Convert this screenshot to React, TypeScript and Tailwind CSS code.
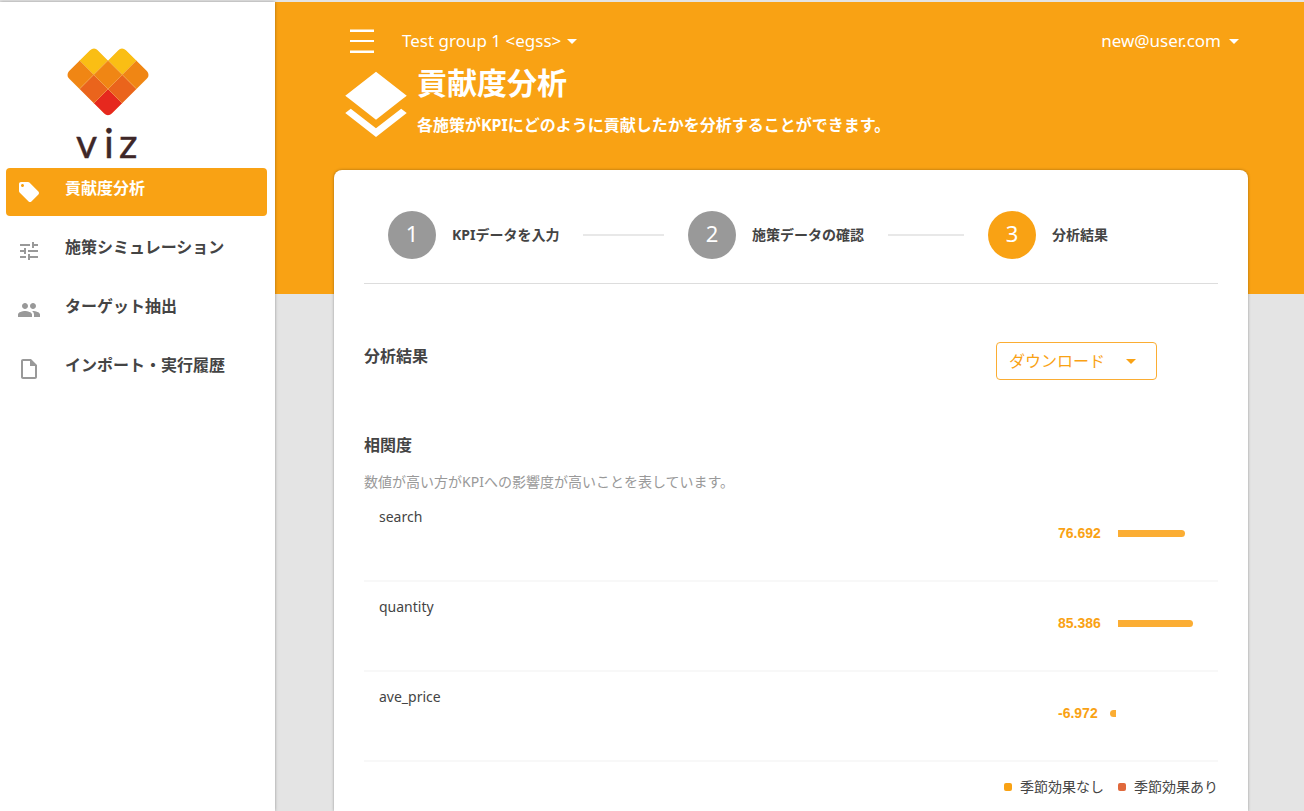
import type { ReactNode } from 'react';
import {
  MdLayers,
  MdLocalOffer,
  MdOutlineInsertDriveFile,
  MdPeople,
  MdTune,
} from 'react-icons/md';

type NavItem = {
  label: string;
  icon: ReactNode;
  active?: boolean;
};

const navItems: NavItem[] = [
  { label: '貢献度分析', icon: <MdLocalOffer size={24} />, active: true },
  { label: '施策シミュレーション', icon: <MdTune size={24} /> },
  { label: 'ターゲット抽出', icon: <MdPeople size={24} /> },
  { label: 'インポート・実行履歴', icon: <MdOutlineInsertDriveFile size={24} /> },
];

const steps = [
  { label: 'KPIデータを入力', current: false },
  { label: '施策データの確認', current: false },
  { label: '分析結果', current: true },
];

const correlations = [
  { name: 'search', value: 76.692 },
  { name: 'quantity', value: 85.386 },
  { name: 'ave_price', value: -6.972 },
];

function Caret() {
  return (
    <svg width="10" height="5" viewBox="0 0 10 5" fill="currentColor" aria-hidden="true">
      <path d="M0 0h10L5 5z" />
    </svg>
  );
}

function Logo() {
  return (
    <svg width="84" height="120" viewBox="0 0 84 120" role="img" aria-label="viz">
      <defs>
        <clipPath id="heart">
          <path d="M24 2.200Q28 -1.200 32 2.200L42 12.500L52 2.200Q56 -1.200 60 2.200L81 23Q84 27 81 31L46 65.500Q42 69 38 65.500L3 31Q0 27 3 23Z" />
        </clipPath>
      </defs>
      <g clipPath="url(#heart)" stroke="#f5b04a" strokeWidth="0.4">
        <path fill="#fabe14" d="M27.700 -1.700L42 12.500 27.700 26.800 13.500 12.500z" />
        <path fill="#fabe14" d="M56.300 -1.700L70.500 12.500 56.300 26.800 42 12.500z" />
        <path fill="#f08614" d="M13.500 12.500L27.700 26.800 13.500 41 -0.800 26.800z" />
        <path fill="#f08614" d="M42 12.500L56.300 26.800 42 41 27.700 26.800z" />
        <path fill="#f08614" d="M70.500 12.500L84.800 26.800 70.500 41 56.300 26.800z" />
        <path fill="#ea641c" d="M27.700 26.800L42 41 27.700 55.300 13.500 41z" />
        <path fill="#ea641c" d="M56.300 26.800L70.500 41 56.300 55.300 42 41z" />
        <path fill="#e6281e" d="M42 41L56.300 55.300 42 69.600 27.700 55.300z" />
      </g>
      <text
        x="10 38 53"
        y="110"
        fontFamily="Lato, sans-serif"
        fontSize="41"
        fill="#3e2728"
        stroke="#3e2728"
        strokeWidth="0.4"
      >
        viz
      </text>
    </svg>
  );
}

function Sidebar() {
  return (
    <aside className="relative w-[275px] shrink-0 bg-white shadow-[0_0_3px_rgba(0,0,0,0.35)]">
      <div className="flex justify-center pt-[46px] pr-[59px]">
        <Logo />
      </div>
      <nav className="flex flex-col gap-[11px] pr-2 pl-1.5">
        {navItems.map((item) => (
          <a
            key={item.label}
            href="#"
            className={`flex h-12 items-center gap-6 rounded px-[11px] font-bold ${
              item.active ? 'bg-[#f9a214] text-white' : 'text-[#444444]'
            }`}
          >
            <span className={item.active ? 'text-white' : 'text-[#999999]'}>{item.icon}</span>
            <span className="pb-2">{item.label}</span>
          </a>
        ))}
      </nav>
    </aside>
  );
}

function Header() {
  return (
    <header className="h-[292px] bg-[#f9a214] pt-[23px] pr-[65px] pl-[60px] text-white">
      <div className="flex h-8 items-center pl-[15px] text-[17px]">
        <button type="button" aria-label="メニュー">
          <svg width="24" height="24" viewBox="0 0 24 24" fill="currentColor">
            <path d="M0 0.500h24v2.500H0zM0 11h24v2H0zM0 21.500h24v2.500H0z" />
          </svg>
        </button>
        <button type="button" className="ml-7 flex items-center gap-1.5">
          Test group 1 &lt;egss&gt;
          <Caret />
        </button>
        <button type="button" className="ml-auto flex items-center gap-2">
          new@user.com
          <Caret />
        </button>
      </div>
      <div className="mt-2 flex items-start">
        <MdLayers size={82} className="shrink-0" />
        <div>
          <h1 className="text-[30px] leading-9 font-bold">貢献度分析</h1>
          <p className="mt-3 leading-6 font-bold">
            各施策がKPIにどのように貢献したかを分析することができます。
          </p>
        </div>
      </div>
    </header>
  );
}

function Stepper() {
  return (
    <ol className="flex border-b border-[#dddddd] pb-6 pl-6">
      {steps.map((step, i) => (
        <li
          key={step.label}
          className={`flex items-center ${i < steps.length - 1 ? 'w-[300px]' : ''}`}
        >
          <span
            className={`flex size-12 shrink-0 items-center justify-center rounded-full pb-1 text-[22px] text-white ${
              step.current ? 'bg-[#f9a214]' : 'bg-[#999999]'
            }`}
          >
            {i + 1}
          </span>
          <span className="ml-4 text-sm font-bold whitespace-nowrap text-[#444444]">
            {step.label}
          </span>
          {i < steps.length - 1 && <span className="mr-6 ml-6 h-0.5 flex-1 bg-[#e8e8e8]" />}
        </li>
      ))}
    </ol>
  );
}

function CorrelationBar({ value }: { value: number }) {
  const width = Math.round(Math.abs(value) * 0.88);

  return (
    <div className="flex h-[7px] gap-0.5">
      <div className="flex w-2 justify-end">
        {value < 0 && <div className="rounded-l-full bg-[#fbad33]" style={{ width }} />}
      </div>
      {value >= 0 && <div className="rounded-r-full bg-[#fbad33]" style={{ width }} />}
    </div>
  );
}

function CorrelationTable() {
  return (
    <table className="w-full table-fixed border-separate border-spacing-0">
      <colgroup>
        <col />
        <col className="w-[50px]" />
        <col className="w-[110px]" />
      </colgroup>
      <tbody>
        {correlations.map((row) => (
          <tr key={row.name} className="h-[90px] align-top text-sm">
            <th
              scope="row"
              className="border-b-2 border-[#f8f8f8] pt-[15px] pl-[15px] text-left font-normal"
            >
              {row.name}
            </th>
            <td className="border-b-2 border-[#f8f8f8] pt-[31px] font-['Liberation_Sans',sans-serif] font-bold text-[#f9a214]">
              {row.value}
            </td>
            <td className="border-b-2 border-[#f8f8f8] pt-[38px]">
              <CorrelationBar value={row.value} />
            </td>
          </tr>
        ))}
      </tbody>
    </table>
  );
}

export default function App() {
  return (
    <div className="flex min-h-screen border-t-2 border-[#e4e4e4] bg-[#e4e4e4] font-['Noto_Sans','Noto_Sans_CJK_JP',sans-serif] text-base text-[#444444]">
      <Sidebar />
      <div className="flex min-w-0 flex-1 flex-col">
        <Header />

        {/* Result card, overlapping the header */}
        <main className="-mt-[124px] mr-14 ml-[59px] flex-1 rounded-t-lg bg-white px-[30px] pt-[41px] shadow-[0_0_3px_rgba(0,0,0,0.35)]">
          <Stepper />

          <div className="mt-[58px] flex items-start justify-between pr-[61px]">
            <h2 className="leading-7 font-bold">分析結果</h2>
            <button
              type="button"
              className="flex h-[38px] items-center gap-[21px] rounded border border-[#fbad33] pr-5 pl-3 text-[#f9a214]"
            >
              ダウンロード
              <Caret />
            </button>
          </div>

          <h2 className="mt-[51px] leading-7 font-bold">相関度</h2>
          <p className="mt-3 text-sm leading-[21px] text-[#999999]">
            数値が高い方がKPIへの影響度が高いことを表しています。
          </p>

          <CorrelationTable />

          <ul className="mt-[15px] flex justify-end gap-3.5 text-sm">
            <li className="flex items-center gap-2">
              <span className="size-2 rounded-xs bg-[#f9a214]" />
              季節効果なし
            </li>
            <li className="flex items-center gap-2">
              <span className="size-2 rounded-xs bg-[#e0693c]" />
              季節効果あり
            </li>
          </ul>
        </main>
      </div>
    </div>
  );
}
